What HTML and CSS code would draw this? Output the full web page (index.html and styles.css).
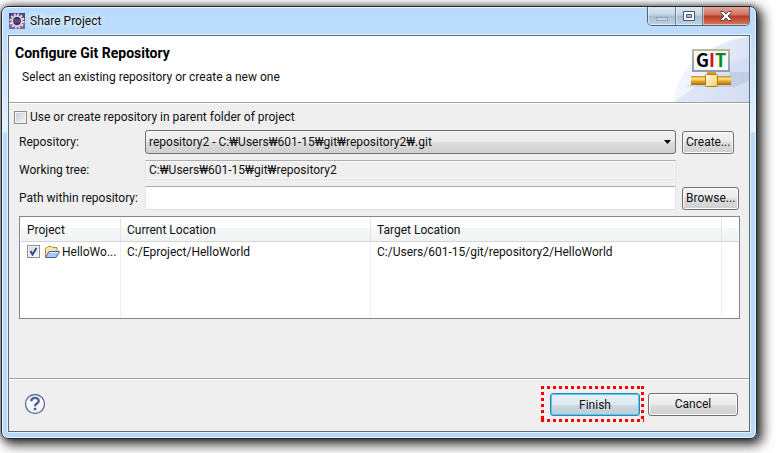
FILE: index.html
```
<!DOCTYPE html>
<html lang="en">
<head>
    <meta charset="utf-8">
    <title>Share Project</title>
    <link rel="stylesheet" href="styles.css">
</head>
<body>
    <div class="window">
        <div class="titlebar">
            <svg class="app-icon" width="16" height="16" viewBox="0 0 16 16">
                <rect width="16" height="16" fill="#50407c"/>
                <rect y="9" width="16" height="7" fill="#7a62a4"/>
                <circle cx="8" cy="8" r="6.6" fill="none" stroke="#e8e4dc" stroke-width="2" stroke-dasharray="2 1.46"/>
                <circle cx="8" cy="8" r="5" fill="#3a2f62" stroke="#e8e4dc" stroke-width="1.6"/>
                <path d="M4 7h8M4 9h8" stroke="#74699c"/>
            </svg>
            <span class="title">Share Project</span>
            <div class="caption-buttons">
                <button class="caption minimize" aria-label="Minimize">
                    <svg width="12" height="12" viewBox="0 0 12 12"><rect x=".5" y="7.5" width="11" height="3" fill="#c9d6e2" stroke="#98a5b1"/></svg>
                </button>
                <button class="caption maximize" aria-label="Maximize">
                    <svg width="12" height="10" viewBox="0 0 12 10"><path d="M.5.5h11v9H.5zM3.5 3.5v3h5v-3z" fill="#fff" fill-rule="evenodd" stroke="#4c5468"/></svg>
                </button>
                <button class="caption close" aria-label="Close">
                    <svg width="12" height="10" viewBox="0 0 12 10"><path d="M.5.5h3L6 3 8.5.5h3v1L8 5l3.5 3.5v1h-3L6 7 3.5 9.5h-3v-1L4 5 .5 1.5z" fill="#fff" stroke="#54464e"/></svg>
                </button>
            </div>
        </div>

        <div class="client">
            <div class="banner">
                <div class="banner-text">
                    <h1>Configure Git Repository</h1>
                    <p>Select an existing repository or create a new one</p>
                </div>
                <svg class="git-logo" width="75" height="66" viewBox="0 0 75 66">
                    <defs>
                        <linearGradient id="swoosh" x1="0" y1="0" x2="1" y2="0"><stop offset="0" stop-color="#f4f7fd"/><stop offset="1" stop-color="#dbe3f6"/></linearGradient>
                        <linearGradient id="pipe" x1="0" y1="0" x2="0" y2="1"><stop offset="0" stop-color="#c98a14"/><stop offset=".3" stop-color="#ffe58a"/><stop offset=".6" stop-color="#e3a527"/><stop offset="1" stop-color="#a86a08"/></linearGradient>
                        <linearGradient id="joint" x1="0" y1="0" x2="1" y2="1"><stop offset="0" stop-color="#fffdf0"/><stop offset="1" stop-color="#f3cb62"/></linearGradient>
                        <linearGradient id="frame" x1="0" y1="0" x2="0" y2="1"><stop offset="0" stop-color="#bfb898"/><stop offset="1" stop-color="#8f9db2"/></linearGradient>
                    </defs>
                    <path d="M0 66C2 34 30 8 75 0v66z" fill="url(#swoosh)"/>
                    <path d="M22 50C40 36 56 26 75 21v45H0z" fill="#c8d4f1" opacity=".4"/>
                    <path d="M12 51l8-5h34l2-10h19v9L60 51z" fill="#8c9cc0" opacity=".25"/>
                    <rect x="19" y="14" width="36" height="21" fill="#f4fafc" stroke="url(#frame)" stroke-width="2"/>
                    <text class="logo-text" y="31"><tspan x="22" fill="#000">G</tspan><tspan x="35" fill="#d2111b">I</tspan><tspan x="41" fill="#078a12">T</tspan></text>
                    <rect x="33" y="36" width="9" height="3" fill="#d99b1c"/>
                    <rect x="17" y="40" width="40" height="9" fill="url(#pipe)"/>
                    <rect x="31.5" y="38.5" width="12" height="12" rx="1" fill="url(#joint)" stroke="#b57a12"/>
                </svg>
            </div>

            <form class="page" onsubmit="return false">
                <label class="parent-option"><input type="checkbox" class="check">Use or create repository in parent folder of project</label>

                <div class="fields">
                    <label for="repository">Repository:</label>
                    <select id="repository" class="combo">
                        <option>repository2 - C:₩Users₩601-15₩git₩repository2₩.git</option>
                    </select>
                    <button type="button" class="btn">Create...</button>

                    <label for="tree">Working tree:</label>
                    <input id="tree" class="text readonly" type="text" value="C:₩Users₩601-15₩git₩repository2" readonly>
                    <span></span>

                    <label for="path">Path within repository:</label>
                    <input id="path" class="text" type="text">
                    <button type="button" class="btn">Browse...</button>
                </div>

                <div class="table-box">
                    <table class="projects">
                        <colgroup>
                            <col class="col-project">
                            <col class="col-current">
                            <col class="col-target">
                            <col>
                        </colgroup>
                        <thead>
                            <tr><th>Project</th><th>Current Location</th><th>Target Location</th><th></th></tr>
                        </thead>
                        <tbody>
                            <tr>
                                <td>
                                    <div class="project">
                                        <input type="checkbox" class="check" aria-label="HelloWorld" checked>
                                        <svg width="16" height="14" viewBox="0 0 16 14">
                                            <path d="M1.5 12V3.5l1-1h1l1-1h3l1 1h4.5v4" fill="#fbe3a4" stroke="#b98a45"/>
                                            <path d="M1.5 12.5l3.5-6h10.5l-3.5 6z" fill="#a9c8f2" stroke="#3f62ae"/>
                                            <path d="M5.5 7.5H14" stroke="#e6f1fd"/>
                                        </svg>
                                        <span class="name">HelloWo...</span>
                                    </div>
                                </td>
                                <td>C:/Eproject/HelloWorld</td>
                                <td>C:/Users/601-15/git/repository2/HelloWorld</td>
                                <td></td>
                            </tr>
                            <tr class="filler"><td></td><td></td><td></td><td></td></tr>
                        </tbody>
                    </table>
                </div>
            </form>

            <div class="footer">
                <button class="help" aria-label="Help">
                    <svg width="22" height="22" viewBox="0 0 22 22">
                        <circle cx="11" cy="11" r="9.5" fill="#f6f7fa" stroke="#5d6f96" stroke-width="1.3"/>
                        <path d="M7.3 8.2C7.3 3.8 14.7 3.9 14.7 7.9c0 2.6-3.7 2.7-3.7 5.3" fill="none" stroke="#4f6090" stroke-width="2.4"/>
                        <rect x="9.7" y="14.8" width="2.6" height="2.4" fill="#4f6090"/>
                    </svg>
                </button>
                <div class="marker"><button class="btn wide default">Finish</button></div>
                <button class="btn wide">Cancel</button>
            </div>
        </div>
    </div>
</body>
</html>
```
FILE: styles.css
```
* {
    box-sizing: border-box;
}

body {
    margin: 0;
    padding: 6px 19px 14px 1px;
    background: #fff;
    color: #111;
    font: 12px/16px Roboto, "Noto Sans CJK KR", sans-serif;
}

button, input, select {
    font: inherit;
    color: inherit;
}

.window {
    padding: 0 6px 6px;
    border: 1px solid #1d2631;
    border-radius: 7px;
    background: linear-gradient(#b9dbfd 0, #bcdcfc 30px, #e4f1fe 125px, #b7d9fc 126px);
    box-shadow: inset 0 0 0 1px #eef7ff, 0 0 6px rgba(0, 0, 0, .5), 4px 4px 12px 2px rgba(0, 0, 0, .75);
}

.titlebar {
    display: flex;
    align-items: flex-start;
    height: 28px;
}

.app-icon {
    margin: 6px 5px 0 1px;
}

.title {
    flex: 1;
    padding-top: 6px;
    text-shadow: 0 0 6px #fff, 0 0 8px #fff;
}

.caption-buttons {
    display: flex;
    border: 1px solid #566675;
    border-top: 0;
    border-radius: 0 0 5px 5px;
    overflow: hidden;
}

.caption {
    display: flex;
    align-items: center;
    justify-content: center;
    width: 28px;
    height: 18px;
    padding: 0;
    border: 0;
    border-right: 1px solid #6c7e90;
    background: linear-gradient(#dbe8f4 0, #c3d5e6 8px, #a5bdd3 9px, #bfd3e6);
    box-shadow: inset 1px -1px 0 rgba(255, 255, 255, .5);
}

.maximize {
    width: 27px;
}

.close {
    width: 46px;
    border-right: 0;
    background: linear-gradient(#e3a797 0, #d0705c 8px, #b93a24 9px, #d6795c);
}

.client {
    border: 1px solid #5b6b7c;
    background: #efefef;
    box-shadow: 0 0 0 1px #e4f2ff;
}

.banner {
    display: flex;
    justify-content: space-between;
    border-bottom: 1px solid #a0a0a0;
    background: #fff;
}

.banner-text {
    padding: 9px 0 0 6px;
}

.banner h1 {
    margin: 0;
    font-size: 14px;
    line-height: 16px;
    color: #000;
}

.banner p {
    margin: 8px 0 0 7px;
}

.git-logo {
    display: block;
}

.logo-text {
    font: bold 18px "Liberation Sans Narrow", "Noto Sans CJK KR", sans-serif;
}

.page {
    padding: 4px 9px 59px 10px;
    border-top: 1px solid #fff;
}

.parent-option {
    display: flex;
    align-items: center;
    gap: 3px;
    height: 18px;
    margin-left: -5px;
}

.check {
    appearance: none;
    flex: none;
    width: 13px;
    height: 13px;
    margin: 0;
    border: 1px solid #8e8f8f;
    background: linear-gradient(135deg, #c8ccd2, #f5f5f5);
    box-shadow: inset 0 0 0 1px #f4f4f4;
}

.check:checked {
    background: url("data:image/svg+xml,%3Csvg xmlns='http://www.w3.org/2000/svg' viewBox='0 0 11 11'%3E%3Cpath d='M2.5 5l2 3.5 4-6.5' fill='none' stroke='%23334c94' stroke-width='2'/%3E%3C/svg%3E"), linear-gradient(135deg, #d5d9de, #f7f7f7);
}

.fields {
    display: grid;
    grid-template-columns: 120px 1fr 57px;
    align-items: center;
    gap: 6px;
    margin: 4px 1px 6px 0;
    white-space: nowrap;
}

.btn {
    justify-self: start;
    height: 23px;
    padding: 0 3px;
    border: 1px solid #707070;
    border-radius: 3px;
    background: linear-gradient(#f2f2f2 0, #ebebeb 50%, #dddddd 50%, #cfcfcf);
    box-shadow: inset 0 0 0 1px #fbfbfb;
    line-height: 20px;
    white-space: nowrap;
}

.combo {
    appearance: none;
    width: 100%;
    height: 24px;
    padding: 0 20px 1px 3px;
    border: 1px solid #707070;
    border-radius: 3px;
    background: url("data:image/svg+xml,%3Csvg xmlns='http://www.w3.org/2000/svg' width='7' height='4'%3E%3Cpath d='M0 0h7L3.5 4z'/%3E%3C/svg%3E") no-repeat right 4px center, linear-gradient(#f2f2f2 0, #ebebeb 50%, #dddddd 50%, #cfcfcf);
}

.text {
    width: 100%;
    height: 24px;
    padding: 0 3px;
    border: 1px solid #e2e3ea;
    border-top-color: #abadb3;
    background: #fff;
}

.readonly {
    height: 20px;
    background: #efefef;
    box-shadow: inset 0 0 0 1px #fafafa;
}

.table-box {
    padding: 1px;
    border: 1px solid #828790;
    background: #fff;
}

.projects {
    width: 100%;
    border-collapse: separate;
    border-spacing: 0;
    table-layout: fixed;
}

.col-project {
    width: 100px;
}

.col-current {
    width: 250px;
}

.col-target {
    width: 351px;
}

.projects th {
    height: 24px;
    padding: 0 6px;
    border-right: 1px solid #e2e3e5;
    border-bottom: 1px solid #d5d5d5;
    background: linear-gradient(#fff 0, #fff 42%, #f7f8fa 43%, #f1f2f4);
    font-weight: normal;
    text-align: left;
}

.projects td {
    height: 19px;
    padding: 0 6px;
    border-right: 1px solid #e7f0fc;
    white-space: nowrap;
}

.projects th:last-child,
.projects td:last-child {
    border-right: 0;
}

.projects .filler td {
    height: 56px;
}

.project {
    display: flex;
    align-items: center;
}

.project svg {
    flex: none;
    margin: 0 2px 0 4px;
}

.footer {
    display: flex;
    align-items: center;
    padding: 7px 11px 9px 15px;
    border-top: 1px solid #a0a0a0;
    box-shadow: inset 0 1px 0 #fff;
}

.help {
    display: flex;
    margin-right: auto;
    padding: 0;
    border: 0;
    background: none;
}

.wide {
    width: 90px;
}

.default {
    display: block;
    border-color: #3c7fb1;
    background: linear-gradient(#e9f1f5 0, #dfe9ee 50%, #ccdbe3 50%, #bccdd6);
    box-shadow: inset 0 0 0 1px #46d0f5;
}

/* red dotted frame around the button to press */
.marker {
    margin-right: 4px;
    padding: 7px 4px 6px 9px;
    background:
        repeating-linear-gradient(90deg, #f00 0 3px, transparent 3px 6px) top / 100% 3px no-repeat,
        repeating-linear-gradient(90deg, #f00 0 3px, transparent 3px 6px) bottom / 100% 3px no-repeat,
        repeating-linear-gradient(#f00 0 3px, transparent 3px 6px) left / 3px 100% no-repeat,
        repeating-linear-gradient(#f00 0 3px, transparent 3px 6px) right / 3px 100% no-repeat;
}
```
